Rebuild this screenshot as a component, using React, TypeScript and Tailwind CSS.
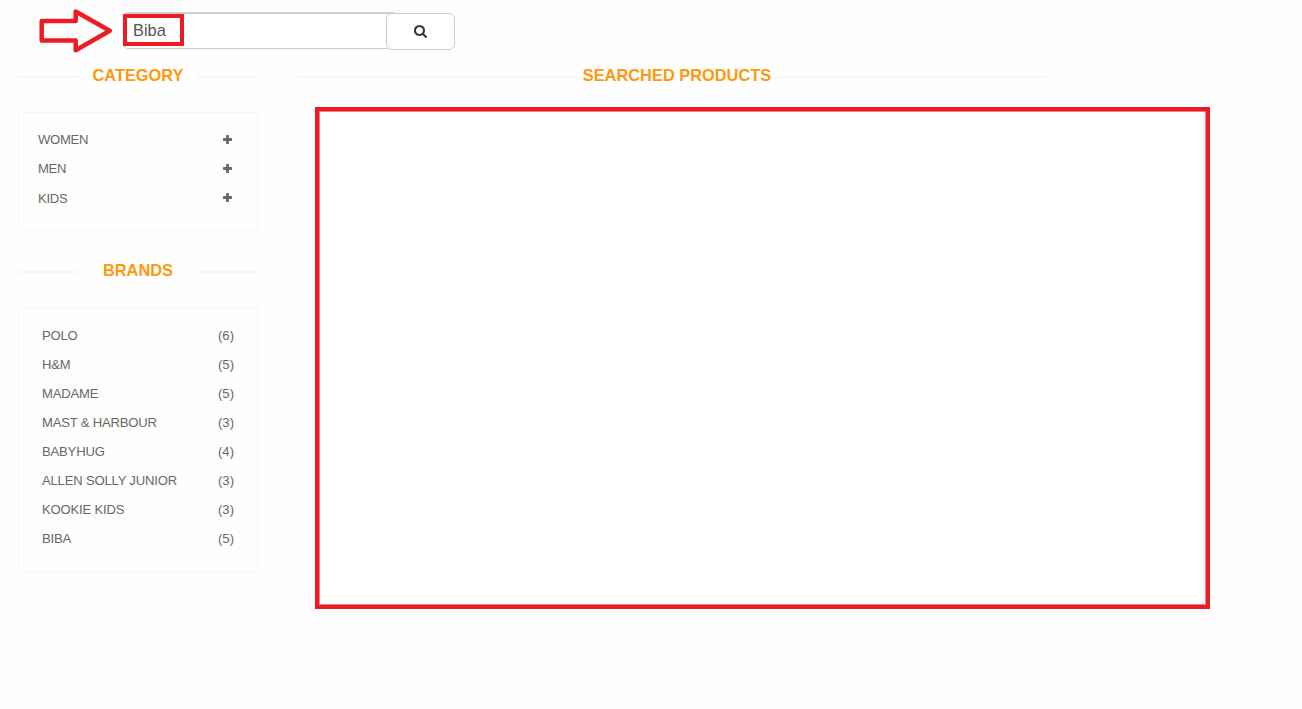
const categories = ["WOMEN", "MEN", "KIDS"];

const brands: [string, number][] = [
  ["POLO", 6],
  ["H&M", 5],
  ["MADAME", 5],
  ["MAST & HARBOUR", 3],
  ["BABYHUG", 4],
  ["ALLEN SOLLY JUNIOR", 3],
  ["KOOKIE KIDS", 3],
  ["BIBA", 5],
];

function PlusIcon() {
  return (
    <svg width="9" height="9" viewBox="0 0 9 9" fill="#696763" className="mr-px mb-px shrink-0">
      <rect x="0" y="3.1" width="9" height="2.8" rx="0.6" />
      <rect x="3.1" y="0" width="2.8" height="9" rx="0.6" />
    </svg>
  );
}

function SearchIcon() {
  return (
    <svg width="13" height="13" viewBox="64 128 1664 1664" fill="#333">
      <path d="M1216 832q0-185-131.5-316.5t-316.5-131.5-316.5 131.5-131.5 316.5 131.5 316.5 316.5 131.5 316.5-131.5 131.5-316.5zm512 832q0 52-38 90t-90 38q-54 0-90-38l-343-342q-179 124-399 124-143 0-273.5-55.5t-225-150-150-225-55.5-273.5 55.5-273.5 150-225 225-150 273.5-55.5 273.5 55.5 225 150 150 225 55.5 273.5q0 220-124 399l343 343q37 37 37 90z" />
    </svg>
  );
}

function SideHeading({ title }: { title: string }) {
  return (
    <div className="flex h-[22px] items-center">
      <div className="mt-[3px] h-[2px] w-[60px] bg-[#f5f5f5]" />
      <h2 className="w-[119px] pl-px text-center text-[16.4px] leading-[22px] font-bold text-[#fe980f]">
        {title}
      </h2>
      <div className="mt-[3px] h-[2px] w-[61px] bg-[#f5f5f5]" />
    </div>
  );
}

function SearchBar() {
  return (
    <header className="flex h-[64px] pt-[8px] pl-[38px]">
      <svg width="76" height="46" viewBox="38 8 76 46" fill="none" className="shrink-0">
        <path
          d="M41.7 21H75.7V11.5L109.8 30.7L75.7 50.2V40.4H41.7Z"
          stroke="#ed1c24"
          strokeWidth="4.5"
          strokeLinejoin="round"
        />
      </svg>
      <div className="relative mt-[4px] ml-[9px] h-[37px] w-[271px] rounded-l-[5px] border border-t-2 border-[#ccc] bg-white">
        <span className="absolute -left-px top-0 flex h-[32px] w-[61px] items-center border-[4.5px] border-[#ed1c24] pt-px pl-[6px] text-[16.4px] leading-none text-[#555]">
          Biba
        </span>
      </div>
      <button className="relative mt-[5px] -ml-[8px] flex h-[37px] w-[69px] items-center justify-center rounded-[6px] border border-[#ccc] bg-white">
        <SearchIcon />
      </button>
    </header>
  );
}

export default function App() {
  return (
    <div className="h-[709px] w-[1302px] overflow-hidden bg-[#fefefe] font-['Liberation_Sans',Arial,sans-serif] text-[13.1px] text-[#696763]">
      <SearchBar />
      <main className="flex">
        <aside className="ml-[18px] w-[240px]">
          <SideHeading title="CATEGORY" />
          <ul className="mt-[26px] h-[119px] border border-[#f7f7f0] pt-[12px] pr-[24px] pl-[19px]">
            {categories.map((name) => (
              <li key={name} className="flex h-[29.4px] items-center justify-between">
                <span className="tracking-[-0.3px]">{name}</span>
                <PlusIcon />
              </li>
            ))}
          </ul>
          <div className="mt-[28px]">
            <SideHeading title="BRANDS" />
          </div>
          <ul className="mt-[26px] h-[265px] border border-[#f7f7f0] pt-[13px] pr-[23px] pl-[23px]">
            {brands.map(([name, count]) => (
              <li key={name} className="flex h-[29.05px] items-center justify-between">
                <span className="tracking-[-0.2px]">{name}</span>
                <span>({count})</span>
              </li>
            ))}
          </ul>
        </aside>
        <section className="ml-[40px] w-[912px]">
          <div className="flex h-[22px] w-[748px] items-center">
            <div className="mt-[3px] h-[2px] w-[279px] bg-[#f5f5f5]" />
            <h2 className="w-[200px] text-center text-[16.4px] leading-[22px] font-bold whitespace-nowrap text-[#fe980f]">
              SEARCHED PRODUCTS
            </h2>
            <div className="mt-[3px] h-[2px] w-[269px] bg-[#f5f5f5]" />
          </div>
          <div className="mt-[21px] ml-[17px] h-[502px] w-[895px] border-4 border-[#ed1c24] bg-[#f47b80] p-px">
            <div className="h-full bg-white" />
          </div>
        </section>
      </main>
    </div>
  );
}
